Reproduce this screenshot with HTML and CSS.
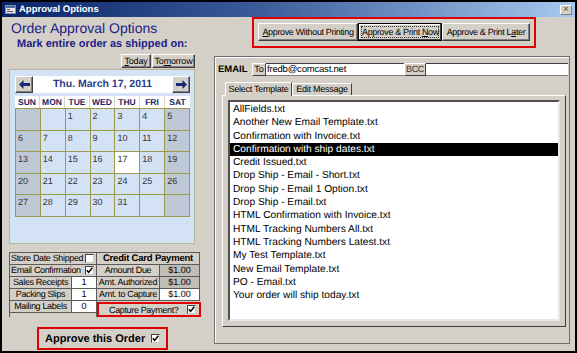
FILE: index.html
```html
<!DOCTYPE html>
<html lang="en">
<head>
  <meta charset="UTF-8" />
  <title>Approval Options</title>
  <link rel="stylesheet" href="styles.css">
</head>
<body>
  <div class="window">
    <div class="titlebar">
      <svg class="app-icon" width="11" height="9" viewBox="0 0 11 9">
        <rect x="0.5" y="0.5" width="10" height="8" fill="#e8e8e8" stroke="#7a8aa8"/>
        <rect x="1" y="1" width="9" height="2" fill="#4a6aa8"/>
        <rect x="2" y="4" width="3" height="1" fill="#555"/>
        <rect x="2" y="6" width="6" height="1" fill="#555"/>
      </svg>
      <span class="title">Approval Options</span>
      <span class="close">&#215;</span>
    </div>

    <div class="client">
      <div class="left">
        <h1>Order Approval Options</h1>
        <h2>Mark entire order as shipped on:</h2>
        <div class="day-btns">
          <button class="btn btn-today"><u>T</u>oday</button>
          <button class="btn btn-tomorrow">To<u>m</u>orrow</button>
        </div>

        <div class="calendar">
          <div class="cal-head">
            <button class="arrow">
              <svg width="11" height="9" viewBox="0 0 11 9"><path d="M0 4.5 L4.5 0 L4.5 3 L11 3 L11 6 L4.5 6 L4.5 9 Z" fill="#1b2a78"/></svg>
            </button>
            <div class="cal-title">Thu. March 17, 2011</div>
            <button class="arrow">
              <svg width="11" height="9" viewBox="0 0 11 9"><path d="M11 4.5 L6.5 0 L6.5 3 L0 3 L0 6 L6.5 6 L6.5 9 Z" fill="#1b2a78"/></svg>
            </button>
          </div>
          <div class="cal-names">
            <div>SUN</div><div>MON</div><div>TUE</div><div>WED</div><div>THU</div><div>FRI</div><div>SAT</div>
          </div>
          <div class="cal-grid">
            <div class="day we"></div><div class="day"></div><div class="day">1</div><div class="day">2</div><div class="day">3</div><div class="day">4</div><div class="day we">5</div>
            <div class="day we">6</div><div class="day">7</div><div class="day">8</div><div class="day">9</div><div class="day">10</div><div class="day">11</div><div class="day we">12</div>
            <div class="day we">13</div><div class="day">14</div><div class="day">15</div><div class="day">16</div><div class="day today">17</div><div class="day">18</div><div class="day we">19</div>
            <div class="day we">20</div><div class="day">21</div><div class="day">22</div><div class="day">23</div><div class="day">24</div><div class="day">25</div><div class="day we">26</div>
            <div class="day we">27</div><div class="day">28</div><div class="day">29</div><div class="day">30</div><div class="day">31</div><div class="day"></div><div class="day we"></div>
          </div>
        </div>

        <div class="opts">
          <div class="opt-a">
            <div class="opt-row check">
              <span class="opt-text">Store Date Shipped</span>
              <span class="chk"></span>
            </div>
            <div class="opt-row check">
              <span class="opt-text">Email Confirmation</span>
              <span class="chk on"><svg width="7" height="7" viewBox="0 0 7 7"><polyline points="0.8,3.2 2.6,5.4 6.3,0.8" fill="none" stroke="#000" stroke-width="1.5"/></svg></span>
            </div>
            <div class="opt-row"><span class="opt-label">Sales Receipts</span><span class="opt-val">1</span></div>
            <div class="opt-row"><span class="opt-label">Packing Slips</span><span class="opt-val">1</span></div>
            <div class="opt-row"><span class="opt-label">Mailing Labels</span><span class="opt-val">0</span></div>
          </div>
          <div class="opt-b">
            <div class="opt-row head">Credit Card Payment</div>
            <div class="opt-row"><span class="opt-label">Amount Due</span><span class="opt-val money grey">$1.00</span></div>
            <div class="opt-row"><span class="opt-label">Amt. Authorized</span><span class="opt-val money grey">$1.00</span></div>
            <div class="opt-row"><span class="opt-label">Amt. to Capture</span><span class="opt-val money">$1.00</span></div>
            <div class="capture">
              <span>Capture Payment?</span>
              <span class="chk on"><svg width="7" height="7" viewBox="0 0 7 7"><polyline points="0.8,3.2 2.6,5.4 6.3,0.8" fill="none" stroke="#000" stroke-width="1.5"/></svg></span>
            </div>
          </div>
        </div>

        <div class="approve">
          <span>Approve this Order</span>
          <span class="chk on"><svg width="7" height="7" viewBox="0 0 7 7"><polyline points="0.8,3.2 2.6,5.4 6.3,0.8" fill="none" stroke="#000" stroke-width="1.5"/></svg></span>
        </div>
      </div>

      <div class="right">
        <div class="actions">
          <button class="btn act act-1"><u>A</u>pprove Without Printing</button>
          <button class="btn act act-2 focused"><span class="focus-rect">Approve &amp; Print <u>N</u>ow</span></button>
          <button class="btn act act-3">Approve &amp; Print L<u>a</u>ter</button>
        </div>

        <div class="panel">
          <div class="email-row">
            <span class="email-label">EMAIL</span>
            <span class="mini-btn to-btn">To</span>
            <span class="field field-to">fredb@comcast.net</span>
            <span class="mini-btn bcc-btn">BCC</span>
            <span class="field field-bcc"></span>
          </div>

          <div class="tabs">
            <div class="tab active">Select Template</div>
            <div class="tab">Edit Message</div>
          </div>

          <div class="tab-body">
            <ul class="list">
              <li>AllFields.txt</li>
              <li>Another New Email Template.txt</li>
              <li>Confirmation with Invoice.txt</li>
              <li class="selected">Confirmation with ship dates.txt</li>
              <li>Credit Issued.txt</li>
              <li>Drop Ship - Email - Short.txt</li>
              <li>Drop Ship - Email 1 Option.txt</li>
              <li>Drop Ship - Email.txt</li>
              <li>HTML Confirmation with Invoice.txt</li>
              <li>HTML Tracking Numbers All.txt</li>
              <li>HTML Tracking Numbers Latest.txt</li>
              <li>My Test Template.txt</li>
              <li>New Email Template.txt</li>
              <li>PO - Email.txt</li>
              <li>Your order will ship today.txt</li>
            </ul>
          </div>
        </div>
      </div>
    </div>
  </div>
</body>
</html>
```

FILE: styles.css
```css
html, body {
  margin: 0;
  padding: 0;
  background-color: #000;
  font-family: 'Liberation Sans', Arial, sans-serif;
  color: #000;
  text-rendering: geometricPrecision;
}

.window {
  width: 577px;
  height: 353px;
  box-sizing: border-box;
  border: 2px solid #000;
  background-color: #D4D0C8;
  display: flex;
  flex-direction: column;
  overflow: hidden;
}

/* title bar */
.titlebar {
  height: 15px;
  flex: none;
  display: flex;
  align-items: center;
  padding: 0 3px 0 3px;
  background: linear-gradient(90deg, #0A246A 0%, #3A5C9A 45%, #A6CAF0 100%);
  color: #fff;
  font-weight: bold;
  font-size: 9.5px;
}

.app-icon {
  margin-right: 3px;
}

.title {
  flex: 1;
}

.close {
  width: 12px;
  height: 10px;
  box-sizing: border-box;
  background-color: #D4D0C8;
  border: 1px solid;
  border-color: #fff #808080 #808080 #fff;
  color: #505050;
  font-size: 10px;
  line-height: 8px;
  text-align: center;
  font-weight: normal;
}

.client {
  flex: 1;
  display: flex;
}

/* left side */
.left {
  width: 211px;
  flex: none;
}

h1 {
  margin: 3px 0 0 9px;
  font-size: 14px;
  line-height: 16px;
  font-weight: normal;
  color: #1C2088;
}

h2 {
  margin: 2px 0 0 15px;
  font-size: 11px;
  line-height: 13px;
  font-weight: bold;
  color: #1C2088;
}

.btn {
  font-family: 'Liberation Sans', Arial, sans-serif;
  background-color: #D4D0C8;
  border: 1px solid;
  border-color: #fff #404040 #404040 #fff;
  box-shadow: inset -1px -1px #808080;
  padding: 0;
  margin: 0;
  color: #000;
  white-space: nowrap;
  overflow: hidden;
  text-rendering: geometricPrecision;
}

.day-btns {
  display: flex;
  justify-content: flex-end;
  gap: 1px;
  margin-top: 3px;
  padding-right: 18px;
  height: 14px;
}

.day-btns .btn {
  font-size: 9px;
  letter-spacing: -0.2px;
  height: 14px;
}

.btn-today { width: 30px; }
.btn-tomorrow { width: 43px; }

.calendar {
  margin: 1px 0 0 7px;
  width: 186px;
  height: 175px;
  box-sizing: border-box;
  border: 1px solid #B4B79A;
  background-color: #D4E2F6;
  padding: 6px 4px 0 5px;
}

.cal-head {
  display: flex;
  height: 17px;
}

.arrow {
  width: 18px;
  height: 17px;
  padding: 0;
  background-color: #D4D0C8;
  border: 1px solid;
  border-color: #fff #404040 #404040 #fff;
  box-shadow: inset -1px -1px #808080;
  display: flex;
  align-items: center;
  justify-content: center;
}

.cal-title {
  flex: 1;
  background-color: #fff;
  color: #1F3C8C;
  font-weight: bold;
  font-size: 10.5px;
  line-height: 17px;
  text-align: center;
}

.cal-names {
  margin-top: 3px;
  height: 12px;
  display: grid;
  grid-template-columns: repeat(7, 1fr);
  background-color: #fff;
}

.cal-names div {
  font-size: 8.5px;
  font-weight: bold;
  color: #1B2660;
  text-align: center;
  line-height: 12px;
  border-right: 1px solid #D8D8C4;
}

.cal-names div:last-child {
  border-right: none;
}

.cal-grid {
  width: 175px;
  height: 109px;
  box-sizing: border-box;
  display: grid;
  grid-template-columns: repeat(7, 1fr);
  grid-template-rows: repeat(5, 1fr);
  border-top: 1px solid #9A9A48;
  border-left: 1px solid #9A9A48;
}

.day {
  border-right: 1px solid #9A9A48;
  border-bottom: 1px solid #9A9A48;
  background-color: #D4E2F6;
  font-size: 9px;
  color: #333;
  padding: 2px 0 0 2px;
}

.day.we {
  background-color: #BFC8D6;
}

.day.today {
  background-color: #fff;
}

/* store / payment options */
.opts {
  display: flex;
  margin: 8px 0 0 7px;
  font-size: 9px;
  letter-spacing: -0.35px;
  white-space: nowrap;
}

.opt-a {
  width: 88px;
  box-sizing: border-box;
  border-top: 1px solid #5A5A5A;
  border-left: 1px solid #5A5A5A;
  border-right: 1px solid #5A5A5A;
}

.opt-b {
  width: 103px;
  box-sizing: border-box;
  border-top: 1px solid #5A5A5A;
}

.opt-row {
  display: flex;
  height: 12px;
  box-sizing: border-box;
  border-bottom: 1px solid #5A5A5A;
  line-height: 11px;
  overflow: hidden;
}

.opt-row.check {
  justify-content: space-between;
  align-items: center;
  padding: 0 2px 0 1px;
}

.opt-label {
  flex: 1;
  text-align: center;
  border-right: 1px solid #5A5A5A;
  overflow: hidden;
}

.opt-val {
  width: 24px;
  flex: none;
  background-color: #fff;
  text-align: center;
  letter-spacing: 0;
}

.opt-b .opt-row {
  border-right: 1px solid #5A5A5A;
}

.opt-b .opt-val {
  width: 39px;
}

.opt-val.grey {
  background-color: #BFBDB8;
}

.opt-row.head {
  justify-content: center;
  font-weight: bold;
  font-size: 9.5px;
  letter-spacing: -0.2px;
}

.capture {
  margin-top: 1px;
  width: 104px;
  height: 15px;
  box-sizing: border-box;
  border: 2px solid #E00000;
  display: flex;
  align-items: center;
  justify-content: space-between;
  padding: 0 3px 0 10px;
}

.chk {
  width: 9px;
  height: 9px;
  box-sizing: border-box;
  background-color: #fff;
  border: 1px solid;
  border-color: #404040 #C8C8C8 #C8C8C8 #404040;
  display: inline-flex;
  align-items: center;
  justify-content: center;
  flex: none;
}

.approve {
  margin: 10px 0 0 35px;
  width: 131px;
  height: 23px;
  box-sizing: border-box;
  border: 2px solid #E00000;
  display: flex;
  align-items: center;
  padding-left: 6px;
  gap: 6px;
  font-size: 11px;
  font-weight: bold;
  white-space: nowrap;
}

/* right side */
.right {
  flex: 1;
}

.actions {
  margin-left: 39px;
  width: 284px;
  height: 31px;
  box-sizing: border-box;
  border: 2px solid #E00000;
  padding: 4px 0 0 4px;
  display: flex;
}

.act {
  height: 18px;
  font-size: 9px;
  letter-spacing: -0.35px;
}

.act-1 { width: 100px; }
.act-2 { width: 84px; }
.act-3 { width: 88px; }

.act.focused {
  border-color: #000;
  box-shadow: inset -1px -1px #404040, inset 1px 1px #fff;
  padding: 2px;
}

.focus-rect {
  display: block;
  height: 100%;
  box-sizing: border-box;
  border: 1px dotted #333;
  line-height: 11px;
}

.panel {
  margin: 8px 0 0 1px;
  width: 356px;
  height: 288px;
  box-sizing: border-box;
  border: 1px solid #6E6E6E;
  box-shadow: inset 1px 1px #fff;
}

.email-row {
  display: flex;
  height: 13px;
  margin: 6px 1px 0 3px;
  font-size: 9.5px;
  line-height: 13px;
  white-space: nowrap;
}

.email-label {
  width: 34px;
  font-weight: bold;
}

.mini-btn {
  box-sizing: border-box;
  border: 1px solid;
  border-color: #fff #404040 #404040 #fff;
  text-align: center;
  line-height: 11px;
  font-size: 9px;
}

.to-btn { width: 14px; }
.bcc-btn { width: 22px; color: #333; letter-spacing: -0.3px; }

.field {
  box-sizing: border-box;
  background-color: #fff;
  border-top: 1px solid #404040;
  border-bottom: 1px solid #808080;
  line-height: 11px;
  padding-left: 1px;
  letter-spacing: -0.2px;
}

.field-to { width: 138px; }
.field-bcc { flex: 1; }

.tabs {
  display: flex;
  margin: 6px 0 0 10px;
  height: 13px;
  font-size: 9px;
  letter-spacing: -0.25px;
  white-space: nowrap;
  position: relative;
  z-index: 1;
}

.tab {
  box-sizing: border-box;
  padding: 0 2px;
  margin-top: 1px;
  height: 12px;
  width: 60px;
  line-height: 11px;
  text-align: center;
  border-top: 1px solid #fff;
  border-left: 1px solid #fff;
  border-right: 1px solid #404040;
}

.tab.active {
  margin-top: 0;
  height: 14px;
  width: 67px;
  background-color: #D4D0C8;
  line-height: 12px;
}

.tab-body {
  margin-left: 7px;
  width: 344px;
  height: 232px;
  box-sizing: border-box;
  border: 1px solid;
  border-color: #fff #404040 #404040 #fff;
  padding: 4px 5px 0 5px;
}

.list {
  list-style: none;
  margin: 0;
  height: 221px;
  box-sizing: border-box;
  padding: 1px 0 0 0;
  background-color: #fff;
  border: 2px solid;
  border-color: #505050 #E8E8E8 #E8E8E8 #505050;
  font-size: 10.2px;
}

.list li {
  height: 13.3px;
  line-height: 13.3px;
  padding-left: 3px;
  white-space: nowrap;
}

.list li.selected {
  background-color: #000;
  color: #fff;
}
```
